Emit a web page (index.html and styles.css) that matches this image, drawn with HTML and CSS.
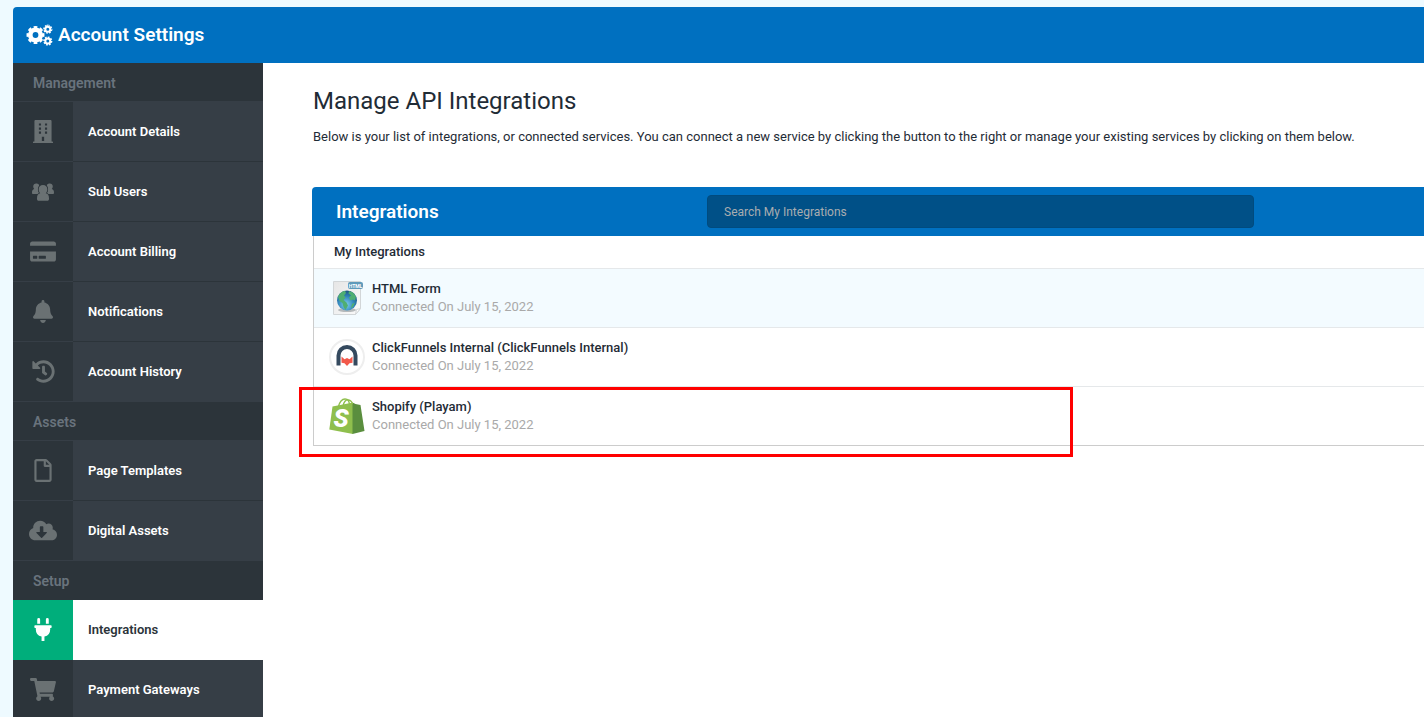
FILE: index.html
```html
<!DOCTYPE html>
<html lang="en">
<head>
    <meta charset="UTF-8">
    <meta name="viewport" content="width=device-width, initial-scale=1.0">
    <title>Account Settings</title>
    <link rel="stylesheet" href="styles.css">
</head>
<body>
    <div class="page">
        <header class="topbar">
            <svg class="topbar-icon" viewBox="0 0 27 22" aria-hidden="true">
                <g fill="none" stroke="#fff">
                    <circle cx="9.500" cy="11" r="5.200" stroke-width="4.600"/>
                    <circle cx="9.500" cy="11" r="7.600" stroke-width="2.800" pathLength="16" stroke-dasharray="1.200 0.800" stroke-dashoffset="0.600"/>
                    <circle cx="21.800" cy="5.200" r="2.500" stroke-width="2"/>
                    <circle cx="21.800" cy="5.200" r="3.800" stroke-width="1.600" pathLength="16" stroke-dasharray="1.200 0.800"/>
                    <circle cx="21.800" cy="17" r="2.500" stroke-width="2"/>
                    <circle cx="21.800" cy="17" r="3.800" stroke-width="1.600" pathLength="16" stroke-dasharray="1.200 0.800"/>
                </g>
            </svg>
            <h1>Account Settings</h1>
        </header>

        <div class="layout">
            <nav class="sidebar">
                <h2>Management</h2>
                <ul>
                    <li><a href="#">
                        <span class="icon"><svg width="20" height="23" viewBox="0 0 448 512"><path fill-rule="evenodd" d="M436 480h-20V24c0-13-11-24-24-24H56C43 0 32 11 32 24v456H12c-7 0-12 5-12 12v20h448v-20c0-7-5-12-12-12zM132 76h48v48h-48zM268 76h48v48h-48zM132 166h48v48h-48zM268 166h48v48h-48zM132 256h48v48h-48zM268 256h48v48h-48zM198 376h52v90h-52z"/></svg></span>
                        <span class="label">Account Details</span>
                    </a></li>
                    <li><a href="#">
                        <span class="icon"><svg width="22" height="18" viewBox="0 0 22 18"><path d="M4.2 0.5C6 0.3 7.3 1.4 7.2 3.2 7.1 4.3 6.6 5.2 6 5.9L7.5 11H1.2C0.4 11 0 10.500 0 9.700 0 7.500 0.600 6.300 2.200 6 1.500 5.200 1.200 4.300 1.200 3.300 1.200 1.700 2.500 0.600 4.200 0.500zM17.800 0.500C16 0.300 14.700 1.400 14.800 3.200 14.900 4.300 15.400 5.200 16 5.900L14.500 11h6.300c0.800 0 1.200-0.500 1.200-1.300 0-2.200-0.600-3.400-2.200-3.700 0.700-0.800 1-1.700 1-2.700 0-1.600-1.300-2.700-3-2.800z"/><path stroke="#2c343a" stroke-width="1.600" paint-order="stroke" d="M11 2C13.700 2 15.300 3.700 15.300 6.200 15.300 7.900 14.700 9.400 13.800 10.300 16 10.800 17 12.400 17 15.300V16c0 1.200-0.600 1.800-1.800 1.800H6.800C5.600 17.800 5 17.200 5 16V15.300C5 12.400 6 10.800 8.200 10.300 7.300 9.400 6.700 7.900 6.700 6.200 6.700 3.700 8.300 2 11 2z"/></svg></span>
                        <span class="label">Sub Users</span>
                    </a></li>
                    <li><a href="#">
                        <span class="icon"><svg width="26" height="23" viewBox="0 0 576 512"><path d="M0 432c0 26.500 21.500 48 48 48h480c26.500 0 48-21.500 48-48V256H0v176zm192-68c0-6.600 5.400-12 12-12h136c6.600 0 12 5.400 12 12v40c0 6.600-5.400 12-12 12H204c-6.600 0-12-5.400-12-12v-40zm-128 0c0-6.600 5.400-12 12-12h72c6.600 0 12 5.400 12 12v40c0 6.600-5.400 12-12 12H76c-6.600 0-12-5.400-12-12v-40zM576 80v48H0V80c0-26.500 21.500-48 48-48h480c26.500 0 48 21.500 48 48z"/></svg></span>
                        <span class="label">Account Billing</span>
                    </a></li>
                    <li><a href="#">
                        <span class="icon"><svg width="20" height="23" viewBox="0 0 448 512"><path d="M224 512c35.320 0 63.970-28.650 63.970-64H160.030c0 35.350 28.650 64 63.970 64zm215.390-149.710c-19.320-20.760-55.470-51.990-55.470-154.290 0-77.700-54.480-139.900-127.940-155.160V32c0-17.670-14.320-32-31.980-32s-31.980 14.330-31.980 32v20.840C118.560 68.100 64.080 130.300 64.080 208c0 102.300-36.150 133.530-55.470 154.290-6 6.450-8.660 14.160-8.610 21.710.11 16.400 12.980 32 32.100 32h383.800c19.120 0 32-15.600 32.100-32 .05-7.550-2.610-15.270-8.610-21.710z"/></svg></span>
                        <span class="label">Notifications</span>
                    </a></li>
                    <li><a href="#">
                        <span class="icon"><svg width="23" height="23" viewBox="0 0 512 512"><path d="M504 255.531c.253 136.640-111.180 248.372-247.820 248.468-59.015.042-113.223-20.530-155.822-54.911-11.077-8.940-11.905-25.541-1.839-35.607l11.267-11.267c8.609-8.609 22.353-9.551 31.891-1.984C173.062 425.135 212.781 440 256 440c101.705 0 184-82.311 184-184 0-101.705-82.311-184-184-184-48.814 0-93.149 18.969-126.068 49.932l50.754 50.754c10.080 10.080 2.941 27.314-11.313 27.314H24c-8.837 0-16-7.163-16-16V38.627c0-14.254 17.234-21.393 27.314-11.314l49.372 49.372C129.209 34.136 189.552 8 256 8c136.810 0 247.747 110.780 248 247.531zm-180.912 78.784l9.823-12.630c8.138-10.463 6.253-25.542-4.210-33.679L288 256.349V152c0-13.255-10.745-24-24-24h-16c-13.255 0-24 10.745-24 24v135.651l65.409 50.874c10.463 8.137 25.541 6.253 33.679-4.210z"/></svg></span>
                        <span class="label">Account History</span>
                    </a></li>
                </ul>

                <h2>Assets</h2>
                <ul>
                    <li><a href="#">
                        <span class="icon"><svg width="18" height="23" viewBox="0 0 384 512"><path d="M369.900 97.900L286 14C277 5 264.800 0 252.100 0H48C21.500 0 0 21.500 0 48v416c0 26.500 21.500 48 48 48h288c26.500 0 48-21.500 48-48V131.900c0-12.700-5.100-25-14.100-34zM332.100 128H256V51.900l76.100 76.100zM48 464V48h160v104c0 13.300 10.700 24 24 24h104v288H48z"/></svg></span>
                        <span class="label">Page Templates</span>
                    </a></li>
                    <li><a href="#">
                        <span class="icon"><svg width="28" height="23" viewBox="0 0 640 512"><path fill-rule="evenodd" d="M537.600 226.600c4.100-10.700 6.400-22.400 6.400-34.600 0-53-43-96-96-96-19.700 0-38.100 6-53.300 16.200C367 64.200 315.300 32 256 32c-88.400 0-160 71.600-160 160 0 2.700.1 5.400.2 8.100C40.200 219.800 0 273.200 0 336c0 79.500 64.500 144 144 144h368c70.700 0 128-57.300 128-128 0-61.900-44-113.600-102.400-125.400zm-132.900 88.700L299.300 420.700c-6.200 6.200-16.400 6.200-22.600 0L171.300 315.300c-10.100-10.100-2.900-27.300 11.300-27.300H248V176c0-8.800 7.200-16 16-16h48c8.800 0 16 7.200 16 16v112h65.400c14.200 0 21.400 17.200 11.300 27.300z"/></svg></span>
                        <span class="label">Digital Assets</span>
                    </a></li>
                </ul>

                <h2 class="before-active">Setup</h2>
                <ul>
                    <li class="active"><a href="#" aria-current="page">
                        <span class="icon"><svg width="18" height="23" viewBox="0 0 384 512"><path d="M320 32a32 32 0 0 0-64 0v96h64Zm48 128H16A16 16 0 0 0 0 176v32a16 16 0 0 0 16 16H32v32A160.070 160.070 0 0 0 160 412.800V512h64V412.800A160.070 160.070 0 0 0 352 256V224h16a16 16 0 0 0 16-16V176A16 16 0 0 0 368 160ZM128 32a32 32 0 0 0-64 0v96h64Z"/></svg></span>
                        <span class="label">Integrations</span>
                    </a></li>
                    <li><a href="#">
                        <span class="icon"><svg width="26" height="23" viewBox="0 0 576 512"><path d="M528.120 301.319l47.273-208C578.806 78.301 567.391 64 551.990 64H159.208l-9.166-44.810C147.758 8.021 137.930 0 126.529 0H24C10.745 0 0 10.745 0 24v16c0 13.255 10.745 24 24 24h69.883l70.248 343.435C147.325 417.100 136 435.222 136 456c0 30.928 25.072 56 56 56s56-25.072 56-56c0-15.674-6.447-29.835-16.824-40h209.647C430.447 426.165 424 440.326 424 456c0 30.928 25.072 56 56 56s56-25.072 56-56c0-22.172-12.888-41.332-31.579-50.405l5.517-24.276c3.413-15.018-8.002-29.319-23.403-29.319H218.117l-6.545-32h293.145c11.206 0 20.920-7.754 23.403-18.681z"/></svg></span>
                        <span class="label">Payment Gateways</span>
                    </a></li>
                </ul>
            </nav>

            <main class="content">
                <h2 class="title">Manage API Integrations</h2>
                <p class="intro">Below is your list of integrations, or connected services. You can connect a new service by clicking the button to the right or manage your existing services by clicking on them below.</p>

                <section class="panel">
                    <div class="panel-header">
                        <h3>Integrations</h3>
                        <input type="text" class="search" placeholder="Search My Integrations" aria-label="Search My Integrations">
                    </div>
                    <div class="panel-body">
                        <h4>My Integrations</h4>
                        <ul class="services">
                            <li class="highlight"><a href="#">
                                <svg class="logo" viewBox="0 0 36 36" aria-hidden="true">
                                    <defs>
                                        <linearGradient id="paper" x1="0" y1="0" x2="1" y2="1"><stop offset="0" stop-color="#e6e6e6"/><stop offset="1" stop-color="#fafafa"/></linearGradient>
                                        <radialGradient id="globe" cx="0.45" cy="0.7" r="0.7"><stop offset="0" stop-color="#7fd0f0"/><stop offset="0.6" stop-color="#2e82b8"/><stop offset="1" stop-color="#1d527f"/></radialGradient>
                                    </defs>
                                    <path d="M4.500 1.500h27v27l-5 6h-22z" fill="url(#paper)" stroke="#d2d6d8"/>
                                    <path d="M31.500 28.500l-5 6 1-5z" fill="#fff" stroke="#d2d6d8"/>
                                    <ellipse cx="18" cy="30" rx="9" ry="2" fill="#b5b9bb"/>
                                    <circle cx="18" cy="20.500" r="10" fill="url(#globe)"/>
                                    <path d="M9 17c1-3 3.500-5.500 7-6.200l1 2.200-2 2.500 1.500 2-2 2.500 3 2.500 1.500 3-2.500 4.500-2-3-1-4-3-2zM20 11l4 1.500 3 4-1 4-2-1-2.500 1-1.500-3 2-2-2.500-2zM23 24l3-1.500-2 4.500-2 1z" fill="#4fae72"/>
                                    <rect x="19" y="2" width="15" height="7" rx="2" fill="#5f9abb"/>
                                    <text x="26.500" y="7.500" class="badge-text">HTML</text>
                                </svg>
                                <span class="info"><strong>HTML Form</strong><small>Connected On July 15, 2022</small></span>
                            </a></li>
                            <li><a href="#">
                                <svg class="logo" viewBox="0 0 36 36" aria-hidden="true">
                                    <circle cx="18" cy="18" r="17" fill="#fff" stroke="#eee" stroke-width="2"/>
                                    <path d="M9.500 26.500V16.500a8.500 8.500 0 0 1 17 0v10" fill="none" stroke="#34495e" stroke-width="4"/>
                                    <path d="M12.500 17.500l3 2.800 2.500-1.300 2.500 1.300 3-2.800v6.300l-3 0.500-2.500 2.700-2.500-2.700-3-0.500z" fill="#f2594b"/>
                                </svg>
                                <span class="info"><strong>ClickFunnels Internal (ClickFunnels Internal)</strong><small>Connected On July 15, 2022</small></span>
                            </a></li>
                            <li class="marked"><a href="#">
                                <svg class="logo" viewBox="0 0 36 36" aria-hidden="true">
                                    <path d="M3.500 8.500L24 4.500V36L0.300 31.500z" fill="#8fbf4d"/>
                                    <path d="M23.500 4.600l3 1.400 5 1L35.500 33 23.500 36z" fill="#5a8e3e"/>
                                    <path d="M9 9.500C10.500 4 13 1 16 1c3 0 4.500 3 4.500 6.500M14 8C15 3.500 17.500 1.500 19.500 1.800 22 2.200 23 4 23.500 6" fill="none" stroke="#8fbf4d" stroke-width="1.300"/>
                                    <text x="12" y="28.500" class="bag-letter">S</text>
                                </svg>
                                <span class="info"><strong>Shopify (Playam)</strong><small>Connected On July 15, 2022</small></span>
                            </a></li>
                        </ul>
                    </div>
                </section>
            </main>
        </div>
    </div>
</body>
</html>
```

FILE: styles.css
```css
*,
*::after {
    margin: 0;
    padding: 0;
    box-sizing: border-box;
}

body {
    background: #eefaff;
    color: #1f2c36;
    font-family: Roboto, "Liberation Sans", sans-serif;
    font-size: 13px;
    line-height: 18px;
}

ul {
    list-style: none;
}

a {
    color: inherit;
    text-decoration: none;
}

.page {
    padding: 7px 0 0 13px;
}

/* Top bar */
.topbar {
    display: flex;
    align-items: center;
    gap: 5px;
    height: 56px;
    padding-left: 13px;
    background: #0070c0;
    color: #fff;
    border-top-left-radius: 4px;
}

.topbar-icon {
    width: 27px;
    height: 22px;
}

.topbar h1 {
    font-size: 19px;
    font-weight: 600;
    line-height: 24px;
}

.layout {
    display: flex;
    min-height: calc(100vh - 63px);
}

/* Sidebar */
.sidebar {
    width: 250px;
    flex-shrink: 0;
    background: #2c343a;
}

.sidebar h2 {
    height: 39px;
    padding-left: 20px;
    border-bottom: 1px solid #363e46;
    color: #69737d;
    font-size: 14px;
    font-weight: 600;
    line-height: 40px;
}

.sidebar h2.before-active {
    border-bottom-color: #2c343a;
}

.sidebar a {
    display: flex;
    height: 60px;
}

.icon {
    display: flex;
    align-items: center;
    justify-content: center;
    width: 60px;
    border-bottom: 1px solid #363e46;
}

.icon svg {
    fill: #6a7173;
}

.label {
    flex: 1;
    padding-left: 15px;
    background: #363e46;
    border-bottom: 1px solid #2c343a;
    color: #fff;
    font-weight: 600;
    line-height: 59px;
}

.sidebar li:last-child .label {
    border-bottom-color: #363e46;
}

.active .icon {
    background: #00ae7b;
    border-color: #00ae7b;
}

.active .icon svg {
    fill: #fff;
}

.active .label {
    background: #fff;
    border-color: #fff;
    color: #2c343a;
}

/* Content */
.content {
    flex: 1;
    min-width: 0;
    padding: 22px 0 0 49px;
    background: #fff;
}

.title {
    padding-left: 1px;
    font-size: 24px;
    font-weight: 400;
    line-height: 32px;
}

.intro {
    padding: 11px 0 41px 1px;
}

.panel-header {
    display: grid;
    grid-template-columns: 371fr 547fr 170fr;
    align-items: center;
    height: 49px;
    padding-left: 24px;
    background: #0070c0;
    border-top-left-radius: 4px;
}

.panel-header h3 {
    color: #fff;
    font-size: 19px;
    font-weight: 600;
    line-height: 24px;
}

.search {
    height: 33px;
    padding: 0 16px;
    background: #005087;
    border: 1px solid #004b7f;
    border-radius: 4px;
    color: #fff;
    font-family: inherit;
    font-size: 12px;
}

.search::placeholder {
    color: #a9adb0;
}

.panel-body {
    margin-left: 1px;
    border: solid #ccc;
    border-width: 0 0 1px 1px;
}

.panel-body h4 {
    padding: 7px 20px;
    border-bottom: 1px solid #e5e8ea;
    font-size: 13px;
    font-weight: 500;
}

.services li {
    border-bottom: 1px solid #e5e8ea;
}

.services li:last-child {
    border-bottom: none;
}

.services a {
    display: flex;
    align-items: center;
    gap: 7px;
    height: 58px;
    padding-left: 15px;
}

.highlight {
    background: #f3fbff;
}

.logo {
    width: 36px;
    height: 36px;
}

.info strong,
.info small {
    display: block;
    font-size: 13px;
}

.info strong {
    font-weight: 500;
}

.info small {
    color: #a9a9a9;
}

.badge-text {
    fill: #fff;
    font-size: 5px;
    font-weight: 700;
    text-anchor: middle;
}

.bag-letter {
    fill: #fff;
    font-size: 25px;
    font-style: italic;
    font-weight: 900;
    text-anchor: middle;
}

/* Red frame around the Shopify row */
.marked {
    position: relative;
}

.marked::after {
    content: "";
    position: absolute;
    top: 0;
    left: -15px;
    width: 774px;
    height: 70px;
    border: 3px solid #f00;
    pointer-events: none;
}
```
